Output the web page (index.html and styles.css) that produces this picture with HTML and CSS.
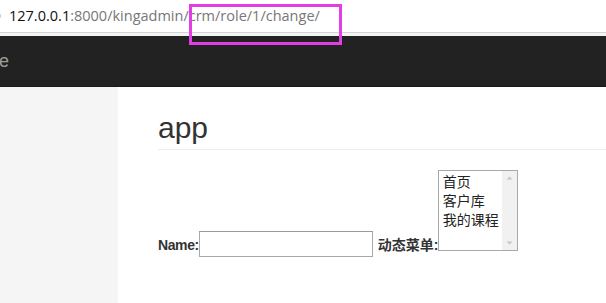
FILE: index.html
```html
<!DOCTYPE html>
<html>
<head>
<meta charset="utf-8">
<link rel="stylesheet" href="styles.css">
</head>
<body>
<div class="addr">
  <svg class="addr-icon" width="5" height="14" viewBox="0 0 5 14"><path d="M-4 1.5 A6 6 0 0 1 -4 12.5" fill="none" stroke="#444" stroke-width="1.4"/></svg>
  <span class="host">127.0.0.1</span><span class="path">:8000/kingadmin/crm/role/1/change/</span>
</div>
<div class="addr-gap"></div>
<div class="navbar"><span class="brand">e</span></div>
<div class="layout">
  <div class="sidebar"></div>
  <div class="main">
    <h2 class="page-header">app</h2>
    <form class="form-row">
      <label class="lbl lbl-name">Name:</label>
      <input class="txt" type="text">
      <label class="lbl lbl-menu">动态菜单:</label>
      <div class="listbox">
        <ul class="options">
          <li>首页</li>
          <li>客户库</li>
          <li>我的课程</li>
        </ul>
        <div class="scrollbar">
          <svg width="15" height="79" viewBox="0 0 15 79">
            <rect x="0" y="0" width="15" height="79" fill="#f1f1f1"/>
            <path d="M4.5 8.5 L7.5 5.5 L10.5 8.5 Z" fill="#c6c6c6"/>
            <path d="M4.5 70.5 L7.5 73.5 L10.5 70.5 Z" fill="#c6c6c6"/>
          </svg>
        </div>
      </div>
    </form>
  </div>
</div>
<div class="highlight"></div>
</body>
</html>
```
FILE: styles.css
```css
html, body {
  margin: 0;
  padding: 0;
  background: #fff;
  overflow: hidden;
}
body {
  width: 606px;
  height: 303px;
  position: relative;
  font-family: "Liberation Sans", "Noto Sans CJK SC", sans-serif;
}
.addr {
  height: 32px;
  border-bottom: 1px solid #d4d4d4;
  display: flex;
  align-items: center;
  font-family: "Open Sans", "Noto Sans", sans-serif;
  font-size: 14.5px;
  line-height: 20px;
  white-space: nowrap;
}
.addr-icon {
  display: block;
  margin-right: 4px;
}
.host {
  color: #111;
}
.path {
  color: #777;
}
.addr-gap {
  height: 3px;
  background: #f4f4f4;
}
.navbar {
  height: 51px;
  background: #222;
  box-sizing: border-box;
  padding-top: 15px;
  border-bottom: 1px solid #1a1a1a;
}
.brand {
  display: block;
  color: #9d9d9d;
  font-size: 18px;
  line-height: 20px;
  margin-left: -1px;
}
.layout {
  display: flex;
  height: 216px;
}
.sidebar {
  width: 118px;
  flex: none;
  background: #f5f5f5;
}
.main {
  flex: 1;
  padding-left: 40px;
}
.page-header {
  margin: 24px 0 0 0;
  padding-bottom: 5px;
  border-bottom: 1px solid #eee;
  font-family: "Liberation Sans", sans-serif;
  font-weight: normal;
  font-size: 30px;
  line-height: 33px;
  color: #333;
}
.form-row {
  display: flex;
  align-items: flex-end;
  margin: 20px 0 0 0;
}
.lbl {
  font-weight: bold;
  font-size: 14px;
  line-height: 16px;
  color: #333;
  margin-bottom: -2px;
}
.lbl-name {
  letter-spacing: -0.4px;
}
.lbl-menu {
  margin-left: 5px;
  width: 60px;
  white-space: nowrap;
}
.txt {
  width: 174px;
  height: 26px;
  box-sizing: border-box;
  border: 1px solid #a9a9a9;
  border-top-color: #999;
  padding: 0 2px;
  margin: 0 0 -6px 0;
  font-size: 14px;
  background: #fff;
}
.listbox {
  width: 80px;
  height: 81px;
  box-sizing: border-box;
  border: 1px solid #a9a9a9;
  display: flex;
  background: #fff;
}
.options {
  list-style: none;
  margin: 0;
  padding: 1px 0 0 4px;
  flex: 1;
  font-family: "Noto Sans CJK SC", sans-serif;
  font-size: 14px;
  line-height: 19px;
  color: #222;
}
.scrollbar {
  width: 15px;
  flex: none;
}
.scrollbar svg {
  display: block;
}
.highlight {
  position: absolute;
  left: 189px;
  top: 4px;
  width: 147px;
  height: 35px;
  border: 3px solid #e23ee6;
}
```
